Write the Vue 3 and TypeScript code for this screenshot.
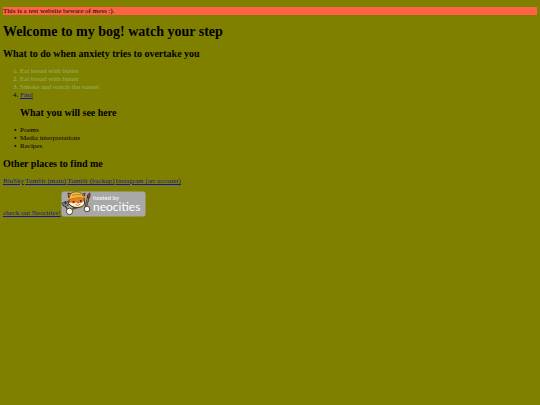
<script setup lang="ts">
interface Step {
  text: string
  muted: boolean
  href?: string
}

const steps: Step[] = [
  { text: 'Eat bread with butter', muted: true },
  { text: 'Eat bread with butter', muted: true },
  { text: 'Smoke and watch the sunset', muted: true },
  { text: 'Find', muted: false, href: '#find' },
]

const topics: string[] = ['Poems', 'Media interpretations', 'Recipes']

const places: { label: string; href: string }[] = [
  { label: 'BluSky', href: '#blusky' },
  { label: 'Tumblr (main)', href: '#tumblr-main' },
  { label: 'Tumblr (backup)', href: '#tumblr-backup' },
  { label: 'Instagram (art account)', href: '#instagram' },
]
</script>

<template>
  <main class="page">
    <p class="notice">This is a test website beware of mess :).</p>
    <h1>Welcome to my bog! watch your step</h1>

    <h2>What to do when anxiety tries to overtake you</h2>
    <ol class="list">
      <li v-for="(step, i) in steps" :key="i" :class="{ muted: step.muted }">
        <a v-if="step.href" :href="step.href">{{ step.text }}</a>
        <template v-else>{{ step.text }}</template>
      </li>
    </ol>

    <h2 class="indented">What you will see here</h2>
    <ul class="list bullets">
      <li v-for="topic in topics" :key="topic">{{ topic }}</li>
    </ul>

    <h2>Other places to find me</h2>
    <nav class="places">
      <a v-for="place in places" :key="place.label" :href="place.href">{{ place.label }}</a>
    </nav>

    <footer class="host">
      <a href="#neocities">check out Neocities!</a>
      <svg class="badge" viewBox="0 0 85 26" role="img" aria-label="hosted by neocities">
        <rect x="0.5" y="0.5" width="84" height="25" rx="2.5" fill="#a8a8a8" />
        <!-- fork -->
        <path d="M1.5 11.5 L3 14.5 L6 14.5 M3.8 10.5 L5 13 M6.5 10 L6.5 14 L4.5 15 L8.5 20" fill="none" stroke="#35332c" stroke-width="2" />
        <path d="M2 12 L3.5 14.3 L6 14 L6.4 10.8 M5 14.5 L8 19" fill="none" stroke="#c5cccf" stroke-width="0.7" />
        <!-- brush -->
        <path d="M24.5 17 L27.5 5.5" stroke="#282420" stroke-width="2.4" />
        <path d="M25 15.5 L27 7" stroke="#c7a368" stroke-width="0.8" />
        <path d="M26.3 6.5 Q26 3.5 28.6 1.8 Q30 4 28.2 7Z" fill="#ad382e" stroke="#332019" stroke-width="0.7" />
        <!-- body and paws -->
        <path d="M12 15 L11 19 L18 17 L20 14Z" fill="#6b4a2a" />
        <circle cx="8.5" cy="20.4" r="3.2" fill="#fffaf0" stroke="#44321f" stroke-width="0.9" />
        <circle cx="26" cy="18" r="2.8" fill="#fffaf0" stroke="#44321f" stroke-width="0.9" />
        <!-- head -->
        <path d="M8 8 L7 2 L12 3 Q17 1 20 4 L24 2 L23 8 Q25 14 20 16 Q12 18 8 13Z" fill="#e67d25" stroke="#453017" stroke-width="1" />
        <path d="M8 12 Q10 11 12 12.5 L16 11.5 L20 12 L23 10.5 Q23.5 14 20 15.3 Q13 17.5 8.5 13Z" fill="#fff3dc" />
        <circle cx="12.5" cy="10.8" r="0.9" fill="#2c241c" />
        <circle cx="19.8" cy="10" r="0.9" fill="#2c241c" />
        <path d="M15.7 11.7 L18 11.3 L17.2 12.8Z" fill="#703727" />
        <path d="M14.5 13.7 Q17 15.5 19.5 13" fill="none" stroke="#6b4529" stroke-width="0.6" />
        <!-- helmet -->
        <path d="M8.5 7.5 Q8 1 15 0.8 Q21 0.5 22.5 6 Q15 5 8.5 8Z" fill="#f0bd3e" stroke="#6c4919" stroke-width="0.8" />
        <path d="M6.5 8.3 Q14 4.2 24 6.2" fill="none" stroke="#f0bd3e" stroke-width="1.2" />
        <path d="M11 4.5 Q15 2.6 20 4" fill="none" stroke="#9a7024" stroke-width="0.8" />
        <text class="badge-small" x="32" y="9">hosted by</text>
        <text class="badge-large" x="32" y="20">neocities</text>
      </svg>
    </footer>
  </main>
</template>

<style>
body {
  background: #808000;
}
</style>

<style scoped>
.page {
  padding: 7px 3px;
  color: #000;
  font-family: "Liberation Serif", "Times New Roman", serif;
  font-size: 7px;
  line-height: 8px;
}

.notice {
  margin: 0 0 9px;
  background: #ff6347;
}

h1 {
  margin: 0 0 8px;
  font-size: 14px;
  line-height: 16px;
}

h2 {
  margin: 8px 0 7px;
  font-size: 10px;
  line-height: 12px;
}

.indented {
  padding-left: 17px;
}

.list {
  margin: 0;
  padding-left: 17px;
}

.bullets {
  list-style-type: "•\a0\a0";
}

.bullets li::marker {
  font-weight: bold;
}

.muted {
  color: #8fb46a;
}

a {
  color: #1414a8;
}

.places {
  display: flex;
  flex-wrap: wrap;
  gap: 1px;
}

.host {
  display: flex;
  align-items: flex-end;
  margin-top: 6px;
}

.badge {
  width: 85px;
  height: 26px;
}

.badge-small,
.badge-large {
  fill: #fff;
  font-family: Lato, "Open Sans", sans-serif;
}

.badge-small {
  font-size: 6px;
}

.badge-large {
  font-size: 12px;
}
</style>
